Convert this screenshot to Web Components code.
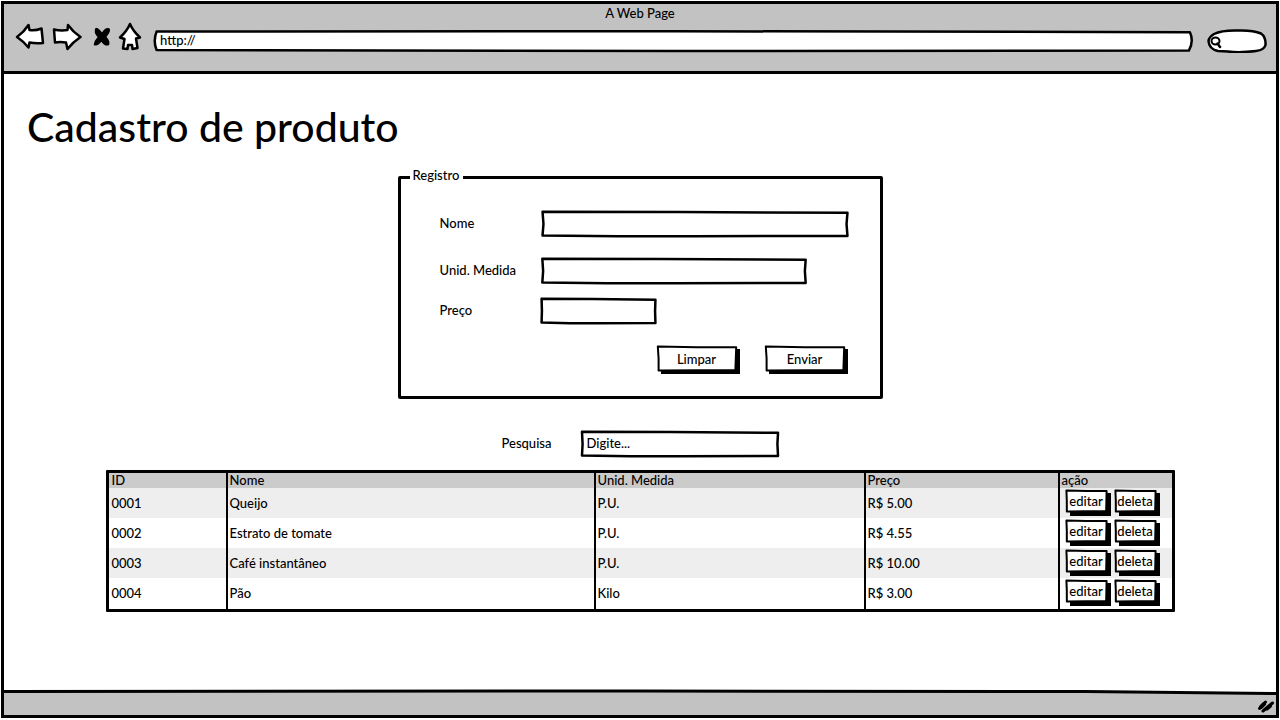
<!DOCTYPE html>
<html lang="pt-BR">
<head>
<meta charset="utf-8">
<title>Cadastro de produto</title>
<style>
  html { background: #fff; }
  body { margin: 0; padding: 1px 1px 2px; box-sizing: border-box; min-height: 100vh; display: flex; flex-direction: column;
    color: #000; font: 500 13px/18px Lato, "Open Sans", sans-serif; --ink: #000; --chrome: #c2c2c2; }
  browser-window { flex: 1; }
</style>
</head>
<body>
<browser-window caption="A Web Page">
  <product-page></product-page>
</browser-window>

<script>
const base = `
  *, *::before { box-sizing: border-box; }
  input, button { font: inherit; color: inherit; margin: 0; background: none; border: 0; outline-offset: 2px; }
  input::placeholder { color: inherit; opacity: 1; }
  .frame { position: absolute; inset: 0; width: 100%; height: 100%; overflow: visible; pointer-events: none; }
  .frame path { vector-effect: non-scaling-stroke; stroke: var(--ink); stroke-linejoin: round; }
`;
const frame = (d, width) => `<svg class="frame" viewBox="0 0 100 100" preserveAspectRatio="none" aria-hidden="true">
  <path d="${d}" fill="#fff" stroke-width="${width}"/></svg>`;
const define = (name, render) => customElements.define(name, class extends HTMLElement {
  constructor() { super(); this.attachShadow({ mode: "open" }); }
  connectedCallback() {
    const t = document.createElement("template");
    t.innerHTML = render(this);
    this.shadowRoot.replaceChildren(t.content.cloneNode(true));
  }
});

define("nav-icon", el => {
  const shapes = {
    back: [30, 28, '<path d="M2 14Q9 9 13.500 2L14.500 7Q20 8 26.500 5.500L28 20Q20 20.500 14.500 19.500L13.500 24.500Q8 18 2 14Z" fill="#fff" stroke-width="2.500"/>'],
    forward: [30, 28, '<path d="M2 6.500Q9 8 15.500 7L16 2Q21 9 28.500 14 21 19 15.500 26L14 19.500Q8 18.500 3 19.500Z" fill="#fff" stroke-width="2.500"/>'],
    stop: [20, 22, '<path d="M4 2.500Q7 3 10 8 13 2 17 3 18.500 5 13.500 11 17.500 15 16.500 18.500 13 20 9.500 14.500 5 20 2.500 18.500 3 15 6.500 11 2 6 4 2.500Z" fill="#000" stroke-width="1.500"/>'],
    home: [24, 30, '<path d="M12 2Q15 9 22 15.500L18 16.500 19.500 26 14.500 27 14 23 10 23 9.500 27 5 26.500 6.500 17 2 15.500Q9 9 12 2Z" fill="#fff" stroke-width="2.500"/>'],
  };
  const [w, h, path] = shapes[el.getAttribute("kind")];
  return `<style>${base} :host { display: block; } button { display: block; padding: 0; }
    svg { display: block; stroke: var(--ink); stroke-linejoin: round; stroke-linecap: round; }</style>
    <button type="button" aria-label="${el.getAttribute("label")}"><svg width="${w}" height="${h}" viewBox="0 0 ${w} ${h}">${path}</svg></button>`;
});

define("browser-window", el => `<style>${base}
  :host { display: flex; flex-direction: column; box-sizing: border-box; border: 3px solid var(--ink); }
  header { background: var(--chrome); border-bottom: 3px solid var(--ink); height: 70px; }
  .caption { text-align: center; }
  nav { display: flex; align-items: center; padding: 0 9px 0 11px; height: 30px; }
  nav-icon[kind=forward] { margin-left: 7px; }
  nav-icon[kind=stop] { margin-left: 10px; }
  nav-icon[kind=home] { margin-left: 6px; }
  .address { position: relative; flex: 1; height: 20px; margin: 8px 15px 0 13px; }
  .search { position: relative; width: 60px; height: 24px; margin-top: 8px; }
  input { position: relative; display: block; width: 100%; height: 100%; padding: 0 5px 2px; }
  .search input { padding-left: 16px; }
  .search svg { position: absolute; inset: 0; }
  main { flex: 1; }
  footer { position: relative; background: var(--chrome); height: 24px; display: flex; justify-content: flex-end; align-items: flex-end; }
  footer .edge { position: absolute; top: -1px; left: 0; width: 100%; height: 5px; overflow: visible; }
  footer .grip { display: block; margin: 0 1px 2px; }
  </style>
  <header>
    <div class="caption">${el.getAttribute("caption")}</div>
    <nav>
      <nav-icon kind="back" label="Voltar"></nav-icon>
      <nav-icon kind="forward" label="Avançar"></nav-icon>
      <nav-icon kind="stop" label="Parar"></nav-icon>
      <nav-icon kind="home" label="Início"></nav-icon>
      <div class="address">${frame("M.15 3 50 1 99.800 6Q100.200 50 99.700 98L50 100 .15 95Q-.2 50 .15 3Z", 2.5)}
        <input type="text" value="http://" aria-label="Endereço"></div>
      <div class="search">
        <svg width="60" height="24" viewBox="0 0 60 24" fill="none" stroke="#000" stroke-width="2.500" stroke-linecap="round">
          <path d="M7 5Q15 1 31 1.500 46 1 54 4.500 59 8 58.500 16 57 21 49 22 32 24 21 22.500L11 22Q2 20 1.500 12 2 8 7 5Z" fill="#fff"/>
          <ellipse cx="8.500" cy="12" rx="4" ry="3.500" stroke-width="2"/><path d="M10.500 14.500 13 18" stroke-width="2.500"/></svg>
        <input type="text" aria-label="Busca">
      </div>
    </nav>
  </header>
  <main><slot></slot></main>
  <footer>
    <svg class="edge" viewBox="0 0 100 5" preserveAspectRatio="none" aria-hidden="true">
      <path d="M0-1 0 2 65 1 100 4V-1Z" fill="#fff"/><path d="M0 1.500 50 1 85 1.500 100 3.500" fill="none" stroke="#000" stroke-width="3" vector-effect="non-scaling-stroke"/></svg>
    <svg class="grip" width="18" height="14" viewBox="0 0 18 14" stroke="#000" stroke-width="3" stroke-linecap="round" aria-hidden="true"><path d="M2.500 9.500 8.500 3M6 12 15.500 4"/><path d="M4 8 7 5M10 9.500 13 7" stroke-width="4"/></svg>
  </footer>`);

define("sketch-button", el => `<style>${base}
  :host { display: block; width: 83px; height: 28px; --drop: 3px; }
  :host([small]) { width: 45px; height: 26px; --drop: 4px; }
  button { position: relative; display: block; width: calc(100% - var(--drop)); height: calc(100% - var(--drop)); padding: 0; }
  button::before { content: ""; position: absolute; inset: 3px calc(0px - var(--drop)) calc(0px - var(--drop)) 4px; background: var(--ink); }
  span { position: relative; }
  </style>
  <button type="${el.getAttribute("type") || "button"}">${frame("M1 2 50 5 99 5 98 96 50 97 2 98 2 50Z", 2)}<span><slot></slot></span></button>`);

define("sketch-field", el => `<style>${base}
  :host { display: grid; grid-template-columns: var(--label-width, 101px) auto; justify-content: start; align-items: center; }
  label { padding-bottom: 3px; }
  .box { position: relative; width: var(--field-width, 100%); height: 26px; }
  input { position: relative; display: block; width: 100%; height: 100%; padding: 0 6px 3px; }
  </style>
  <label for="field">${el.getAttribute("label")}</label>
  <div class="box">${frame("M.5 3 45 4 99.500 7 99.200 50 99.500 96 50 97 25 97 .5 94 .8 50Z", 2.5)}
    <input id="field" type="text" placeholder="${el.getAttribute("hint") || ""}"></div>`);

define("product-form", () => `<style>${base}
  :host { display: block; width: 485px; max-width: 100%; }
  form { margin: 0; }
  fieldset { margin: 0; min-width: 0; border: 3px solid var(--ink); border-radius: 2px; padding: 24px 32px 22px 39px; }
  legend { margin-left: -30px; padding: 0 4px 4px 3px; line-height: 16px; }
  .fields { display: grid; }
  sketch-field:nth-child(1) { --field-width: 308px; }
  sketch-field:nth-child(2) { --field-width: 266px; margin-top: 21px; }
  sketch-field:nth-child(3) { --field-width: 115px; margin-top: 14px; }
  .actions { display: flex; justify-content: flex-end; gap: 25px; margin-top: 22px; }
  </style>
  <form><fieldset>
    <legend>Registro</legend>
    <div class="fields">
      <sketch-field label="Nome"></sketch-field>
      <sketch-field label="Unid. Medida"></sketch-field>
      <sketch-field label="Preço"></sketch-field>
    </div>
    <div class="actions"><sketch-button type="reset">Limpar</sketch-button><sketch-button>Enviar</sketch-button></div>
  </fieldset></form>`);

const products = [
  ["0001", "Queijo", "P.U.", "R$ 5.00"],
  ["0002", "Estrato de tomate", "P.U.", "R$ 4.55"],
  ["0003", "Café instantâneo", "P.U.", "R$ 10.00"],
  ["0004", "Pão", "Kilo", "R$ 3.00"],
];
define("product-table", () => `<style>${base}
  :host { display: block; width: 100%; max-width: 1069px; }
  table { width: 100%; table-layout: fixed; border: 3px solid var(--ink); border-radius: 1px; border-spacing: 0; background: #fff; }
  th, td { padding: 0 2px; text-align: left; font-weight: inherit; border-left: 2px solid var(--ink); }
  th:first-child, td:first-child { border-left: 0; padding-left: 3px; }
  th { height: 15px; line-height: 15px; background: #cbcbcb; }
  td { height: 30px; }
  tbody tr:nth-child(odd) { background: #eee; }
  tbody tr:last-child td { height: 31px; padding-bottom: 1px; }
  .actions { display: flex; gap: 4px; padding-left: 4px; }
  </style>
  <table>
    <colgroup><col style="width:117px"><col style="width:368px"><col style="width:270px"><col style="width:194px"><col></colgroup>
    <thead><tr><th>ID</th><th>Nome</th><th>Unid. Medida</th><th>Preço</th><th>ação</th></tr></thead>
    <tbody>${products.map(p => `<tr>${p.map(v => `<td>${v}</td>`).join("")}
      <td><div class="actions"><sketch-button small>editar</sketch-button><sketch-button small>deleta</sketch-button></div></td></tr>`).join("")}
    </tbody>
  </table>`);

define("product-page", () => `<style>${base}
  :host { display: flex; flex-direction: column; align-items: center; padding: 29px 23px; }
  h1 { align-self: stretch; margin: 0 0 16px; font-size: 41px; line-height: 48px; font-weight: inherit; }
  .search { --label-width: 79px; --field-width: 198px; margin: 32px 0 13px; }
  </style>
  <h1>Cadastro de produto</h1>
  <product-form></product-form>
  <sketch-field class="search" label="Pesquisa" hint="Digite..."></sketch-field>
  <product-table></product-table>`);
</script>
</body>
</html>
